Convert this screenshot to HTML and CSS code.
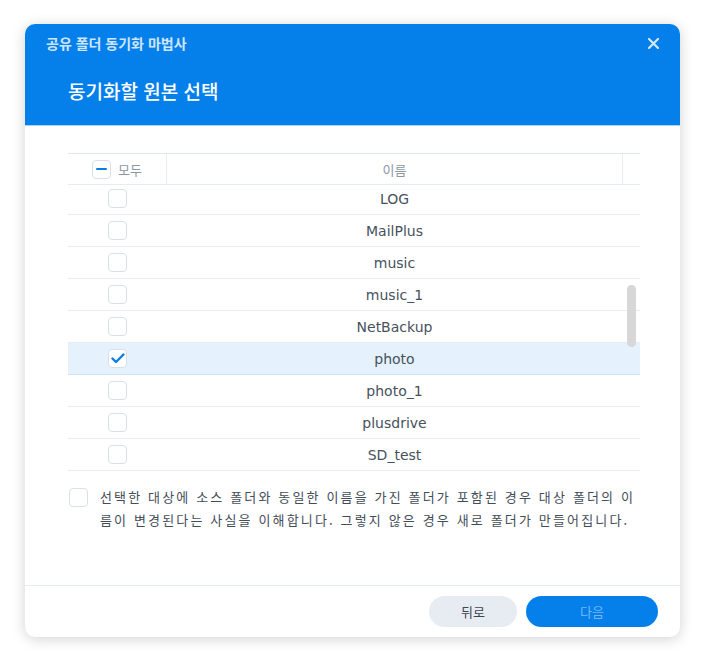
FILE: index.html
```html
<!doctype html>
<html lang="ko">

<head>
    <meta charset="UTF-8">
    <meta name="viewport" content="width=device-width, initial-scale=1.0">
    <title>공유 폴더 동기화 마법사</title>
    <link rel="stylesheet" href="styles.css">
</head>

<body>
    <div class="dialog">
        <div class="dialog-header">
            <div class="topbar">
                <span class="wizard-title">공유 폴더 동기화 마법사</span>
                <span class="close">
                    <svg width="11" height="11" viewBox="0 0 11 11">
                        <path d="M1 1L10 10M10 1L1 10" stroke="#d2e7fc" stroke-width="2.2" stroke-linecap="round" />
                    </svg>
                </span>
            </div>
            <h1 class="step-title">동기화할 원본 선택</h1>
        </div>

        <div class="dialog-body">
            <div class="grid">
                <div class="grid-head">
                    <div class="cell-check head-check">
                        <span class="checkbox partial"><span class="dash"></span></span>
                        <span class="head-label">모두</span>
                    </div>
                    <div class="cell-name head-name">이름</div>
                    <div class="cell-end"></div>
                </div>
                <div class="grid-list">
                    <div class="grid-rows">
                        <div class="row">
                            <div class="cell-check"><span class="checkbox"></span></div>
                            <div class="cell-name">LOG</div>
                            <div class="cell-gap"></div>
                        </div>
                        <div class="row">
                            <div class="cell-check"><span class="checkbox"></span></div>
                            <div class="cell-name">MailPlus</div>
                            <div class="cell-gap"></div>
                        </div>
                        <div class="row">
                            <div class="cell-check"><span class="checkbox"></span></div>
                            <div class="cell-name">music</div>
                            <div class="cell-gap"></div>
                        </div>
                        <div class="row">
                            <div class="cell-check"><span class="checkbox"></span></div>
                            <div class="cell-name">music_1</div>
                            <div class="cell-gap"></div>
                        </div>
                        <div class="row">
                            <div class="cell-check"><span class="checkbox"></span></div>
                            <div class="cell-name">NetBackup</div>
                            <div class="cell-gap"></div>
                        </div>
                        <div class="row selected">
                            <div class="cell-check">
                                <span class="checkbox checked">
                                    <svg width="14" height="11" viewBox="0 0 14 11">
                                        <path d="M1.5 5.5L5 9L12.5 1.5" fill="none" stroke="#0a7ce6" stroke-width="2.4" stroke-linecap="round" stroke-linejoin="round" />
                                    </svg>
                                </span>
                            </div>
                            <div class="cell-name">photo</div>
                            <div class="cell-gap"></div>
                        </div>
                        <div class="row">
                            <div class="cell-check"><span class="checkbox"></span></div>
                            <div class="cell-name">photo_1</div>
                            <div class="cell-gap"></div>
                        </div>
                        <div class="row">
                            <div class="cell-check"><span class="checkbox"></span></div>
                            <div class="cell-name">plusdrive</div>
                            <div class="cell-gap"></div>
                        </div>
                        <div class="row">
                            <div class="cell-check"><span class="checkbox"></span></div>
                            <div class="cell-name">SD_test</div>
                            <div class="cell-gap"></div>
                        </div>
                    </div>
                    <div class="scroll-thumb"></div>
                </div>
            </div>

            <div class="notice">
                <span class="checkbox"></span>
                <p class="notice-text">선택한 대상에 소스 폴더와 동일한 이름을 가진 폴더가 포함된 경우 대상 폴더의 이름이 변경된다는 사실을 이해합니다. 그렇지 않은 경우 새로 폴더가 만들어집니다.</p>
            </div>
        </div>

        <div class="dialog-footer">
            <button class="btn btn-back">뒤로</button>
            <button class="btn btn-next">다음</button>
        </div>
    </div>
</body>

</html>
```

FILE: styles.css
```css
* {
    box-sizing: border-box;
    font-family: "DejaVu Sans", "Noto Sans CJK KR", sans-serif;
}

body {
    background-color: #ffffff;
    margin: 0;
    padding: 24px 25px;
}

.dialog {
    width: 655px;
    height: 613px;
    background: white;
    border-radius: 10px;
    box-shadow: 0 2px 14px rgba(0, 0, 0, 0.18);
    overflow: hidden;
    display: flex;
    flex-direction: column;
}

.dialog-header {
    height: 102px;
    background-color: #0580eb;
    border-bottom: 1px solid #a9d3f8;
    padding: 10px 22px 0 21px;
}

.topbar {
    display: flex;
    justify-content: space-between;
    align-items: center;
    height: 18px;
}

.wizard-title {
    color: #cfe5fb;
    font-family: "Noto Sans CJK KR", sans-serif;
    font-size: 14px;
    font-weight: 700;
}

.close {
    display: flex;
    margin-right: -1px;
}

.step-title {
    margin: 26px 0 0 22px;
    color: #ffffff;
    font-family: "Noto Sans CJK KR", sans-serif;
    font-size: 19px;
    font-weight: 500;
    line-height: 26px;
}

.dialog-body {
    flex: 1;
    padding: 27px 40px 0 43px;
}

.grid-head {
    display: flex;
    height: 32px;
    border-top: 1px solid #e2e7ed;
    border-bottom: 1px solid #e6ebf0;
}

.cell-check {
    width: 99px;
    display: flex;
    justify-content: center;
    align-items: center;
}

.cell-name {
    flex: 1;
    text-align: center;
    font-size: 14px;
    color: #47515c;
}

.cell-end {
    width: 18px;
    border-left: 1px solid #e9edf1;
}

.cell-gap {
    width: 18px;
}

.head-check {
    gap: 7px;
    border-right: 1px solid #e9edf1;
}

.head-label,
.head-name {
    font-family: "Noto Sans CJK KR", sans-serif;
    font-size: 13px;
    color: #8d97a2;
}

.head-name {
    display: flex;
    align-items: center;
    justify-content: center;
}

.grid-list {
    position: relative;
    height: 286px;
    overflow: hidden;
}

.grid-rows {
    margin-top: -2px;
}

.row {
    display: flex;
    align-items: center;
    height: 32px;
    border-bottom: 1px solid #e9edf2;
}

.row.selected {
    background-color: #e5f1fd;
    border-bottom-color: #d3e4f5;
}

.checkbox {
    width: 19px;
    height: 19px;
    border: 1.5px solid #d9e0e8;
    border-radius: 4px;
    background: white;
    display: inline-flex;
    align-items: center;
    justify-content: center;
    flex-shrink: 0;
}

.dash {
    width: 11px;
    height: 2.5px;
    background-color: #0a7ce6;
    border-radius: 1px;
}

.scroll-thumb {
    position: absolute;
    right: 4px;
    top: 100px;
    width: 9px;
    height: 62px;
    border-radius: 5px;
    background-color: #d7d7d7;
}

.notice {
    display: flex;
    align-items: flex-start;
    gap: 12px;
    margin-top: 14px;
    margin-left: 1px;
}

.notice .checkbox {
    margin-top: 3px;
}

.notice-text {
    margin: 0;
    max-width: 538px;
    font-family: "Noto Sans CJK KR", sans-serif;
    font-size: 13px;
    line-height: 23px;
    letter-spacing: 2.15px;
    color: #434d59;
    word-break: break-all;
}

.dialog-footer {
    height: 52px;
    border-top: 1px solid #e6ebf0;
    display: flex;
    justify-content: flex-end;
    align-items: center;
    gap: 9px;
    padding: 0 22px 0 0;
}

.btn {
    height: 31px;
    border: none;
    border-radius: 16px;
    font-family: "Noto Sans CJK KR", sans-serif;
    font-size: 13px;
    cursor: pointer;
}

.btn-back {
    width: 88px;
    background-color: #e7ecf2;
    color: #3c4650;
}

.btn-next {
    width: 132px;
    background-color: #0580eb;
    color: #72b6f3;
}
```
